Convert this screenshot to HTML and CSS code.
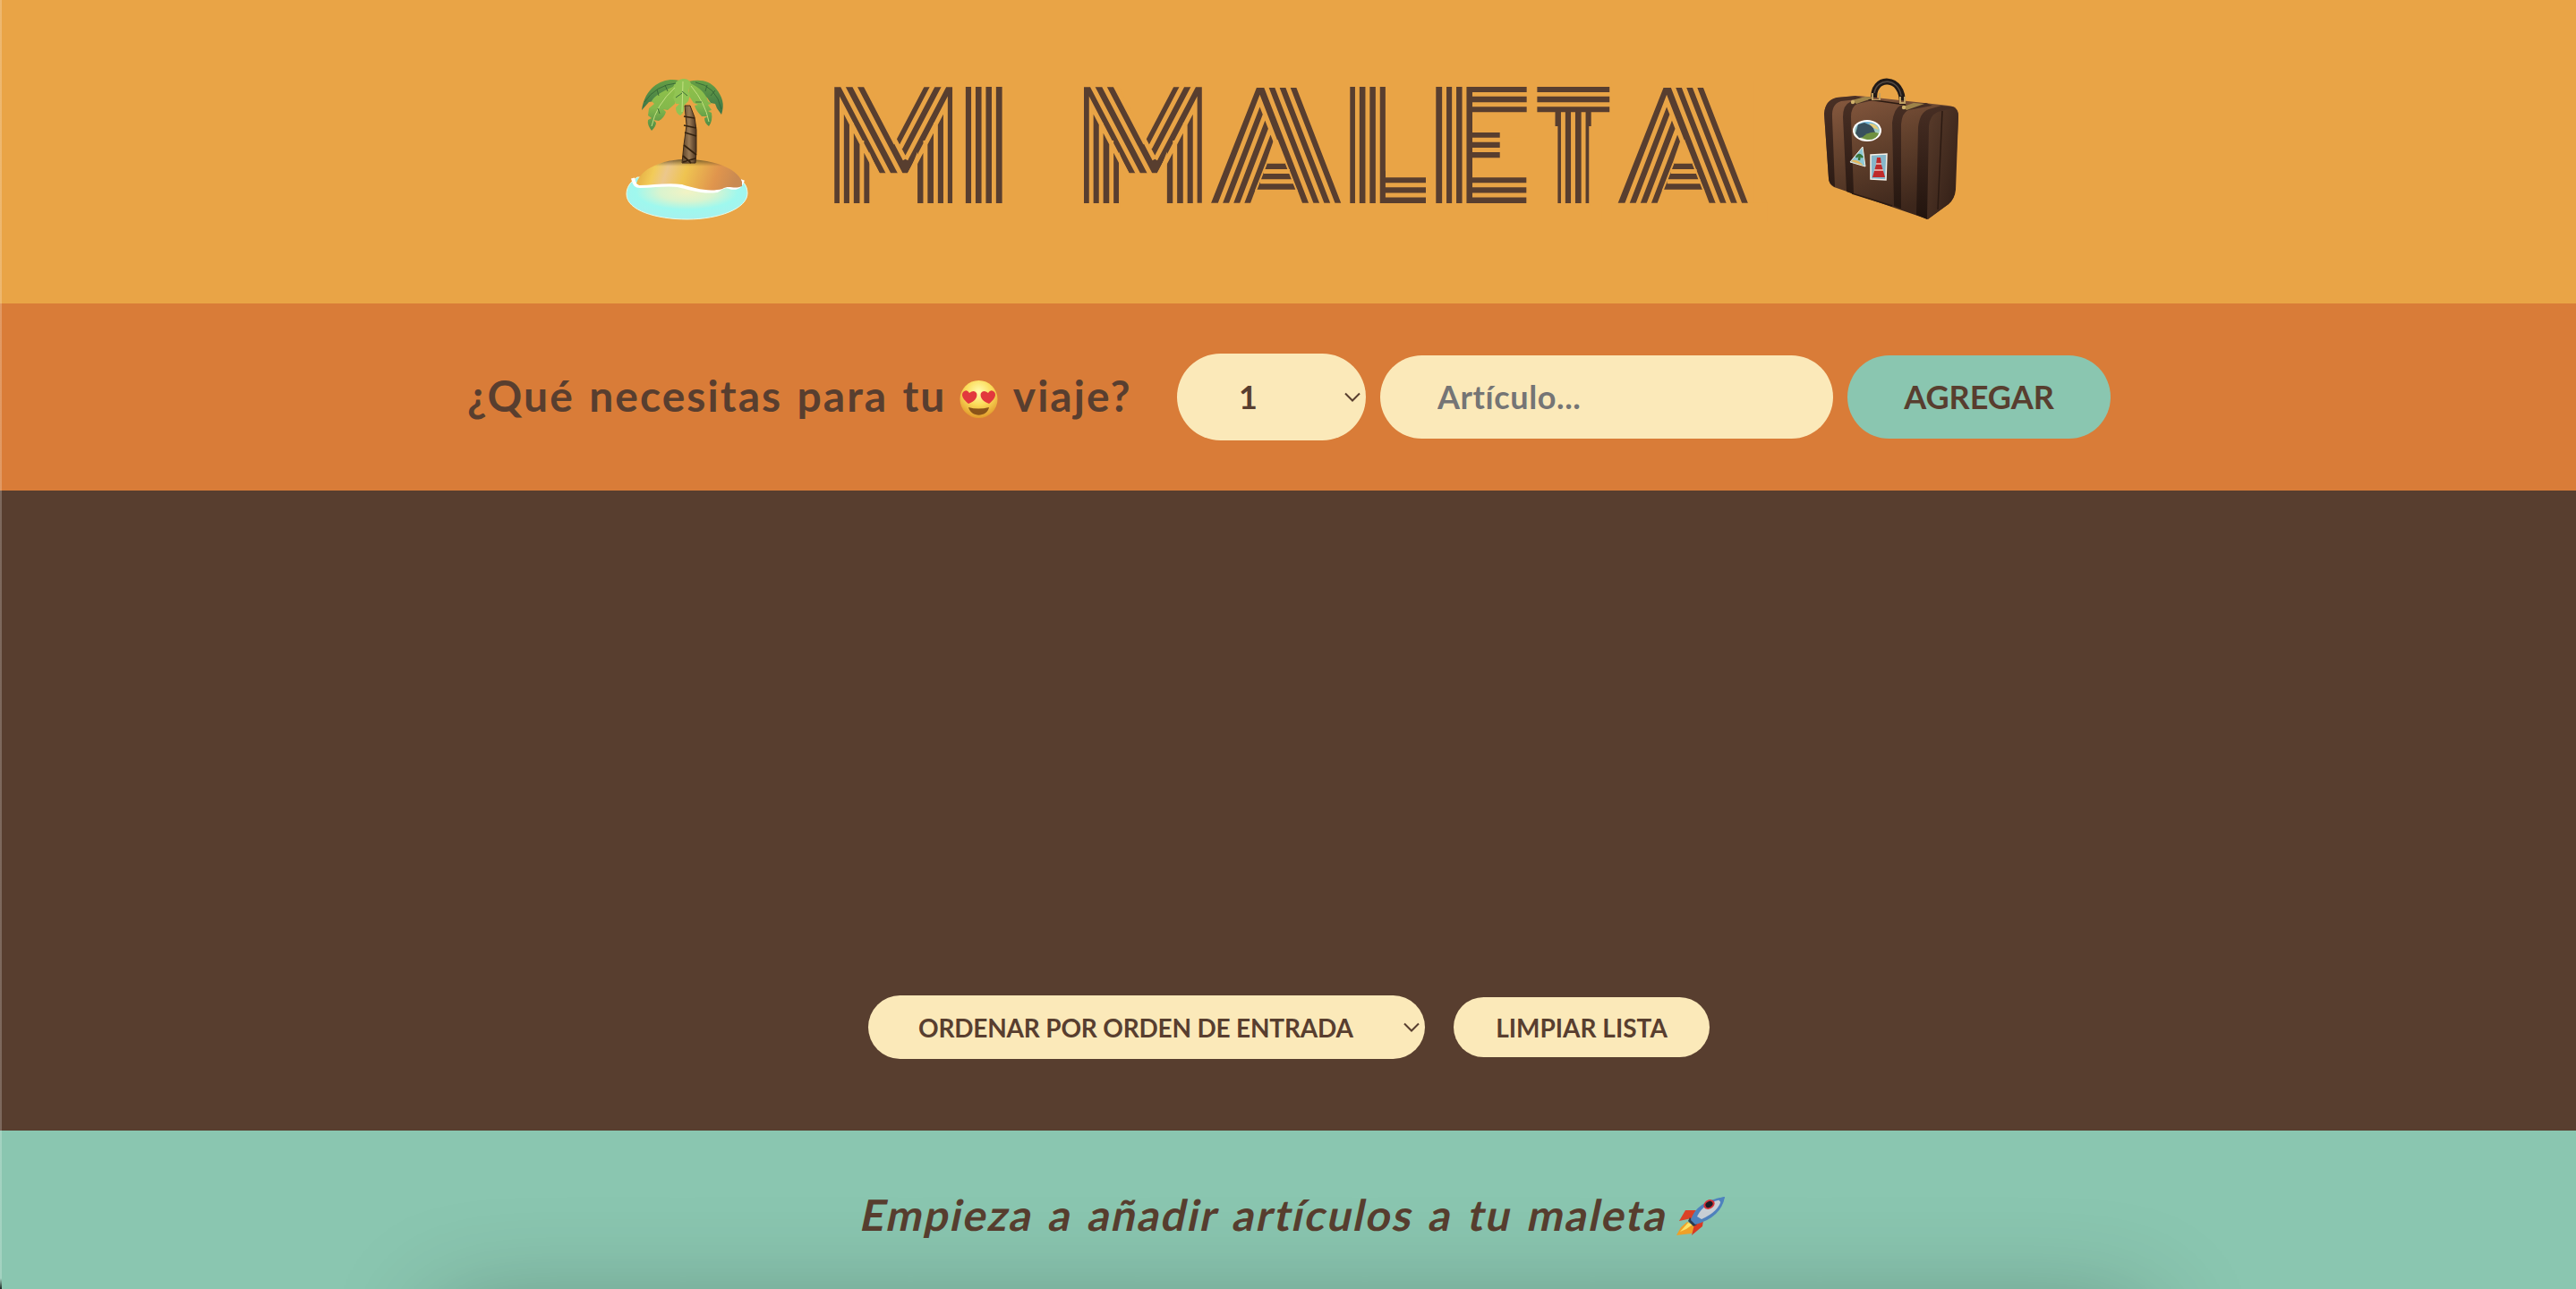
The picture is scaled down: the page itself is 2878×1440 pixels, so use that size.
FILE: index.html
```html
<!DOCTYPE html>
<html lang="es">
<head>
<meta charset="utf-8">
<title>Mi Maleta</title>
<link rel="stylesheet" href="styles.css">
</head>
<body>
<div class="app">
  <header class="logo">
    <svg class="island" width="138" height="160" viewBox="0 0 138 160">
      <defs>
        <radialGradient id="sea" cx=".5" cy=".35" r=".65"><stop offset="0" stop-color="#f2f3c4"/><stop offset=".35" stop-color="#d9f4cf"/><stop offset=".65" stop-color="#9ff8ee"/><stop offset="1" stop-color="#a6f1ee"/></radialGradient>
        <linearGradient id="sand" x1="0" y1="0" x2="1" y2=".1"><stop offset="0" stop-color="#e0a23c"/><stop offset=".2" stop-color="#f2cb58"/><stop offset=".32" stop-color="#ecc78c"/><stop offset=".5" stop-color="#efc451"/><stop offset=".8" stop-color="#e0954d"/><stop offset="1" stop-color="#c98a52"/></linearGradient>
        <linearGradient id="shade" x1="0" y1="0" x2="0" y2="1"><stop offset="0" stop-color="#4d3a1c" stop-opacity=".75"/><stop offset=".6" stop-color="#6b4a1c" stop-opacity="0"/></linearGradient>
        <linearGradient id="trunk"><stop offset="0" stop-color="#5a4026"/><stop offset=".5" stop-color="#9a7a55"/><stop offset="1" stop-color="#4a3320"/></linearGradient>
        <linearGradient id="leaf" x1="0" y1="0" x2="0" y2="1"><stop offset="0" stop-color="#8fc04a"/><stop offset=".5" stop-color="#84b94c"/><stop offset="1" stop-color="#4e8a45"/></linearGradient>
        <linearGradient id="leafdark" x1="0" y1="0" x2="0" y2="1"><stop offset="0" stop-color="#67a044"/><stop offset="1" stop-color="#3b7348"/></linearGradient>
      </defs>
      <path fill="url(#sea)" stroke="#e9fbe6" stroke-width="1" d="M13 111C4 117 1 123 1 130c0 18 33 28 68 28s67-12 67-29c0-7-3-12-8-15z"/>
      <path fill="none" stroke="#fff" stroke-width="4" d="M8 112c2 8 4 9 8 9 16 0 28-3 42-1 18 4 28 8 44 6 6-4 9-6 14-4 6 2 12 1 15-8"/>
      <path fill="url(#sand)" d="M12 118C18 99 45 91 70 91s54 9 60 25v5c-10 4-14-2-22 3-15 4-32-1-45-5-18-2-32 1-48 1z"/>
      <path fill="url(#shade)" d="M25 103C37 94 52 91 70 91s38 5 50 13c-30-4-60-5-95-1z"/>
      <path fill="url(#trunk)" stroke="#3e2a18" d="M66 31h6l5 13 2 14v24l-1 13H63l2-20 3-22z"/>
      <path fill="none" stroke="#34220f" stroke-width="1.700" d="M65 43l12 2M65 53l14 3M66 61l13 4M65 75l14 11M64 87l9 8M64 94l14-4"/>
      <path fill="url(#leafdark)" d="M60 3C44-1 22 8 18 36l8-9 34-6z"/>
      <path fill="url(#leafdark)" d="M70 4c13-3 24-1 31 8 7 9 10 17 6 29l-5-7-2-5-5-1-4-6-18-8z"/>
      <path fill="url(#leaf)" d="M57 8C46 13 32 19 29 26l3 3-6 5-1 8 4 3-4 2c-1 4 1 8 4 12 3-3 5-6 5-9l-3-3 6 1c4-2 7-6 8-10l-3-3 5 1 8-7 1-8z"/>
      <path fill="url(#leaf)" d="M72 6c10 4 18 12 20 20l4 3-4 1 4 6-4 1 4 2c1 6 0 11-3 15-3-2-5-5-5-9l4-2-7 0c-4-4-7-8-8-12l4-1-5-2-6-9z"/>
      <path fill="#91c453" d="M64 1c-6 1-10 5-11 10l2 5-2 6 3 7 4 0-4 4c0 4 1 7 5 9 4-3 5-7 4-11l5-5 2-7-2-4 3-9c-2-4-5-5-9-5z"/>
      <path fill="none" stroke="#c4e082" d="M64 4l-1 34M55 11Q34 30 29 54M73 9Q89 28 93 49"/>
      <path fill="none" stroke="#356536" stroke-width=".9" d="M21 27Q34 8 56 6M78 5q23 4 29 30M35 13l2 7M44 8l3 7M91 8l-2 7M100 14l-5 6M56 22l7-5M69 20l-6-5M38 40l-2-6M85 27l-7 0"/>
    </svg>
    <svg class="wordmark" width="1026" height="140" viewBox="928 92 1026 140">
      <defs>
        <g id="cuts-m">
          <g class="trim">
            <path d="M965 92V97L998.700 161.500 1032.500 97V92z"/>
            <path d="M972.500 174L982.500 193.300H1014L1024.400 173.500V232H972.500z"/>
          </g>
          <g class="grooves">
            <path d="M940.400 228V117.500L984 201M951.400 137V228M962.900 157V228M1033.900 157V228M1045.400 137V228M1056.400 228V117.500L1013 201"/>
            <path d="M941.400 96L994.700 198M954.600 96L1007 196M968 96L1011 178M1042.100 96L1006 165M1055 96L1012 178"/>
          </g>
        </g>
        <g id="cuts-a">
          <g class="trim">
            <path d="M1346 90H1407L1404.300 97 1353 227V244H1346z"/>
            <path d="M1445.300 90H1505V244H1499L1498.300 227 1448 97z"/>
            <path d="M1335 226.700H1520V248H1335zM1402.700 211.700H1449.400L1455.500 228H1396.600z"/>
            <path d="M1422.800 157L1413.900 182.700H1438L1427.500 156z"/>
          </g>
          <g class="grooves">
            <path d="M1414.200 96L1465.200 228M1426.200 96L1477.200 228M1438.300 96L1489.300 228"/>
            <path d="M1363 228L1407.500 112.500 1425.800 160M1375.200 228L1413.300 128M1387.300 228L1419.400 144M1412 191.500H1441M1408 202.700H1445"/>
            <path class="hair" d="M1414.900 182.500L1403 213M1436.800 182.500L1448.800 213"/>
          </g>
        </g>
      </defs>
      <g class="letters">
        <text class="m" x="925.200" y="219.700" textLength="145.800" lengthAdjust="spacingAndGlyphs">M</text>
        <text x="1073.700" y="223.700" textLength="51" lengthAdjust="spacingAndGlyphs">I</text>
        <text class="m" x="1204" y="219.700" textLength="145.800" lengthAdjust="spacingAndGlyphs">M</text>
        <text class="a" x="1349.700" y="233.500" textLength="152" lengthAdjust="spacingAndGlyphs">A</text>
      </g>
      <use href="#cuts-m"/>
      <use href="#cuts-m" x="278.800"/>
      <use href="#cuts-a"/>
      <path class="grooves" d="M1087.500 96V228M1099 96V228M1110.400 96V228"/>
      <g class="letters">
        <text class="a" x="1804.300" y="233.500" textLength="152" lengthAdjust="spacingAndGlyphs">A</text>
      </g>
      <use href="#cuts-a" x="454.600"/>
      <g class="letters">
        <text class="l" x="1505.800" y="221.700" textLength="86.800" lengthAdjust="spacingAndGlyphs">L</text>
        <text x="1598.500" y="223.700" textLength="111.500" lengthAdjust="spacingAndGlyphs">E</text>
        <text class="t" x="1721.600" y="216.700" textLength="72.600" lengthAdjust="spacingAndGlyphs">T</text>
      </g>
      <g class="trim">
        <path d="M1548 185H1596V198.200H1548z"/>
        <path d="M1600 90H1604.300V230H1600zM1645 125.300H1709V148H1645zM1645 176.300H1709V198.200H1645zM1675.700 140H1709V184H1675.700z"/>
        <path d="M1711 125.300H1737.500V230H1711zM1777.700 125.300H1804V230H1777.700z"/>
      </g>
      <g class="grooves">
        <path d="M1516.400 96V228M1527.900 96V228M1539.300 96V228M1547.900 206.700H1595M1547.900 218H1595"/>
        <path d="M1613.600 96V228M1624.600 96V228M1636 96V228M1645 105.400H1707M1645 116.700H1707M1645 156.300H1700M1645 167.500H1700M1645 206.700H1707M1645 218H1707"/>
        <path d="M1713 105.400H1802M1713 116.700H1802M1746.400 125.300V228M1757.500 125.300V228M1769.100 125.300V228"/>
      </g>
    </svg>
    <svg class="case" width="152" height="160" viewBox="0 0 152 160">
      <defs>
        <linearGradient id="hide" x1="0" y1="0" x2=".4" y2="1"><stop offset="0" stop-color="#8a5b40"/><stop offset=".5" stop-color="#61402c"/><stop offset="1" stop-color="#3c261b"/></linearGradient>
        <linearGradient id="side" x1="0" y1="0" x2="1" y2="1"><stop offset="0" stop-color="#5a3c2b"/><stop offset="1" stop-color="#2f1d15"/></linearGradient>
        <linearGradient id="strap" x1="0" y1="0" x2="0" y2="1"><stop offset="0" stop-color="#4a3025"/><stop offset="1" stop-color="#22140e"/></linearGradient>
        <linearGradient id="view" x1="0" y1="0" x2="0" y2="1"><stop offset="0" stop-color="#6fb4dc"/><stop offset="1" stop-color="#cfe0a6"/></linearGradient>
      </defs>
      <path fill="none" stroke="#211a17" stroke-width="7" d="M57 25C53-4 91-3 88 29"/>
      <path fill="none" stroke="#554a43" stroke-width="1.500" d="M57 17C60-1 84 0 87 20"/>
      <path fill="url(#hide)" d="M1 40Q2 25 15 22L40 20 140 31Q152 32 151 44L148 125Q147 135 140 141L117 158 12 122Q6 119 6 112z"/>
      <path fill="url(#side)" d="M116 50Q118 35 133 32L144 32Q151 34 151 44L147 125Q147 135 140 141L116 158z"/>
      <path fill="url(#strap)" d="M1 40Q2 25 15 22L36 20 47 23 20 26Q9 29 10 44L13 122Q6 118 6 112zM22 44Q22 30 30 27L60 24 38 29Q31 32 31 44L34 130 26 127zM77 50Q79 34 86 31L115 28 122 31 95 36Q88 39 87 52L87 146 79 143zM106 55Q108 38 118 35L132 31 148 33 128 38Q119 42 118 54L116 158 104 153z"/>
      <path fill="none" stroke="#2b1a12" stroke-width="1.500" d="M133 37L128 147M32 129l45 14M50 24l42 6"/>
      <path fill="#9d8349" d="M32 25l15-4 10 1-20 7zM89 32l12-4 12 1-20 7z"/>
      <circle cx="33" cy="27" r="2.200" fill="#d0b26b"/><circle cx="90" cy="33" r="2.200" fill="#d0b26b"/>
      <path fill="#c0a063" d="M54 17h2v7h6v-7h2v8H54zM85 21h2v6h3v-6h2v8h-7z"/>
      <ellipse cx="49" cy="59" rx="16" ry="12" fill="#fff"/><ellipse cx="49" cy="59" rx="14" ry="10" fill="url(#view)"/>
      <path fill="#39505e" d="M36 62l3-10 7-2 9 4 3 7-8 5-10 1z"/><path fill="#6f9140" d="M43 67q9-9 19-5-3 8-13 7z"/><path fill="#e5cc78" d="M51 51q8-1 11 7l-6-2z"/>
      <path fill="#8ec8d6" stroke="#f2eee0" stroke-width="1" d="M44 77L30 94l17 5z"/><path fill="#e5b85e" d="M31 93q6-4 14 5z"/><path fill="none" stroke="#38753a" stroke-width="2.500" d="M37 89q3-6 7 0M40 92l1-7"/>
      <path fill="#86b6ca" stroke="#f5f1e7" stroke-width="1.500" d="M53 86l18-1-1 29-17-1z"/><path fill="#bf2a2a" d="M60 89h4l1 8 4 14H55l4-14z"/><path fill="none" stroke="#f1c8bf" stroke-width="1.300" d="M59 96h6M57 103h10"/>
    </svg>
  </header>

  <form class="add-form">
    <h3 class="question">¿Qué necesitas para tu
      <svg class="face" width="43" height="44" viewBox="0 0 43 44"><defs><radialGradient id="skin" cx=".5" cy=".3" r=".7"><stop offset="0" stop-color="#fffbb0"/><stop offset=".5" stop-color="#fbdc5a"/><stop offset="1" stop-color="#e29a2b"/></radialGradient></defs><circle cx="21.500" cy="22" r="21" fill="url(#skin)"/><path fill="#e2383d" d="M10 27C5 23 1 18 4 14q4-4 7 1 5-4 8 0c2 5-3 10-9 12z"/><path fill="#e2383d" d="M33 27c5-4 9-9 6-13q-4-4-7 1-5-4-8 0c-2 5 3 10 9 12z"/><path fill="#8a5419" d="M10 31q11 3 23 0c-2 11-20 12-23 0z"/></svg>
      viaje?</h3>
    <div class="select qty"><span>1</span><svg class="chev" width="18" height="11" viewBox="0 0 18 11"><path d="M1 1.500l8 8 8-8"/></svg></div>
    <input class="item" type="text" placeholder="Artículo...">
    <button class="add" type="button"><span>AGREGAR</span></button>
  </form>

  <main class="list">
    <div class="actions">
      <div class="select sort"><span>ORDENAR POR ORDEN DE ENTRADA</span><svg class="chev" width="18" height="11" viewBox="0 0 18 11"><path d="M1 1.500l8 8 8-8"/></svg></div>
      <button class="clear" type="button"><span>LIMPIAR LISTA</span></button>
    </div>
  </main>

  <footer class="stats">
    <em>Empieza a añadir artículos a tu maleta</em>
    <svg class="rocket" width="56" height="46" viewBox="0 0 56 46">
      <path fill="#dc4228" d="M23 16H11L4 28l14-3z"/>
      <path fill="#f3a329" d="M13 29L6 35 1 44l8-1 9-1 5-8z"/><path fill="#ffe66a" d="M14 30L5 40l7-3 7-5z"/>
      <path fill="#dc3b24" d="M32 21l-2 13-12 10 3-12z"/>
      <path fill="#2d3a4e" d="M16 24l8 8-4 2-6-6z"/>
      <path fill="#4f83bf" d="M17 27Q23 6 55 1 51 24 22 32z"/>
      <path fill="#c9d0d6" d="M24 23Q31 8 51 4 49 17 29 26z"/>
      <path fill="#4f83bf" d="M47 3l8-2-3 8z"/>
      <ellipse cx="37.500" cy="9.500" rx="6.500" ry="5" fill="#d8343a" transform="rotate(-30 37.500 9.500)"/><ellipse cx="37.500" cy="9.500" rx="4.300" ry="3.200" fill="#1e1e28" transform="rotate(-30 37.500 9.500)"/>
    </svg>
  </footer>
</div>
</body>
</html>
```
FILE: styles.css
```css
* { box-sizing: border-box; }
body { margin: 0; background: #583e2f; }
.app {
  position: relative;
  display: grid;
  grid-template-rows: 339px 209px 715px 177px;
  height: 1440px;
  overflow: hidden;
  color: #583e2f;
  font-family: Lato, "Open Sans", sans-serif;
  font-weight: 700;
  font-variant-ligatures: none;
}
/* window edge highlight */
.app::before {
  content: "";
  position: absolute;
  inset: 0 auto 0 0;
  width: 2px;
  z-index: 1;
  background: linear-gradient(rgba(255, 255, 255, .22) 1428px, rgba(0, 0, 0, .8));
}
.logo { display: flex; background: #e9a446; padding: 87px 0 0 699px; align-items: flex-start; }
.wordmark { margin: 5px 0 0 91px; overflow: visible; }
.case { margin-left: 83px; overflow: visible; }
.letters { font: 900 170.500px/1 Inter, sans-serif; fill: #583e2f; stroke: #583e2f; stroke-width: 6; stroke-linejoin: miter; }
.letters .m { font: 700 159px/1 "DejaVu Sans", sans-serif; stroke-width: 14; }
.letters .a { font-size: 179px; stroke-width: 12; }
.letters .l { font-size: 165.500px; stroke-width: 10; }
.letters .t { font-size: 151.300px; stroke-width: 20; }
.grooves { fill: none; stroke: #e9a446; stroke-width: 4.900; stroke-miterlimit: 10; }
.grooves .hair { stroke-width: 2; }
.trim { fill: #e9a446; }
.add-form { display: flex; align-items: center; background: #d97c38; margin: 0; padding: 0 0 1px 522px; }
.question { width: 793px; margin: 0 0 3px; font-size: 48px; letter-spacing: 2.050px; word-spacing: 2.500px; white-space: nowrap; }
.face { vertical-align: -8px; margin: 0 2px 0 -2px; }
.select { display: flex; align-items: center; justify-content: space-between; background: #fbe9b9; }
.chev { fill: none; stroke: #583e2f; stroke-width: 2; }
.qty { width: 211px; height: 97px; border-radius: 49px; font-size: 36px; padding: 0 6px 0 69px; margin-right: 16px; }
.item { width: 506px; height: 93px; border: 0; border-radius: 47px; background: #fbe9b9; font: inherit; font-size: 36px; letter-spacing: .6px; padding: 0 64px; margin: 0 16px 0 0; }
.item::placeholder { color: #757575; opacity: 1; }
button { border: 0; font: inherit; color: inherit; padding: 0; }
.add { width: 294px; height: 93px; border-radius: 47px; background: #8ac6b0; font-size: 36px; }
.list { display: flex; align-items: flex-end; justify-content: center; background: #583e2f; padding: 0 0 80px 2px; }
.actions { display: flex; gap: 32px; align-items: center; }
.sort { width: 622px; height: 71px; border-radius: 36px; font-size: 28px; letter-spacing: -.2px; padding: 0 6px 0 56px; }
.clear { width: 286px; height: 67px; border-radius: 34px; background: #fbe9b9; font-size: 28px; }
.stats { position: relative; display: flex; align-items: flex-start; gap: 7px; background: #8ac6b0; padding: 65px 0 0 963px; font-size: 48px; }
.stats em { font-style: normal; letter-spacing: 2.050px; word-spacing: 3.700px; transform: skewX(-12deg); }
.rocket { margin-top: 8px; }
/* shadow cast by the panel that starts below the fold */
.stats::after {
  content: "";
  position: absolute;
  top: 200px;
  left: 490px;
  right: 480px;
  height: 300px;
  box-shadow: 0 0 120px rgba(0, 0, 0, .28);
}
```
